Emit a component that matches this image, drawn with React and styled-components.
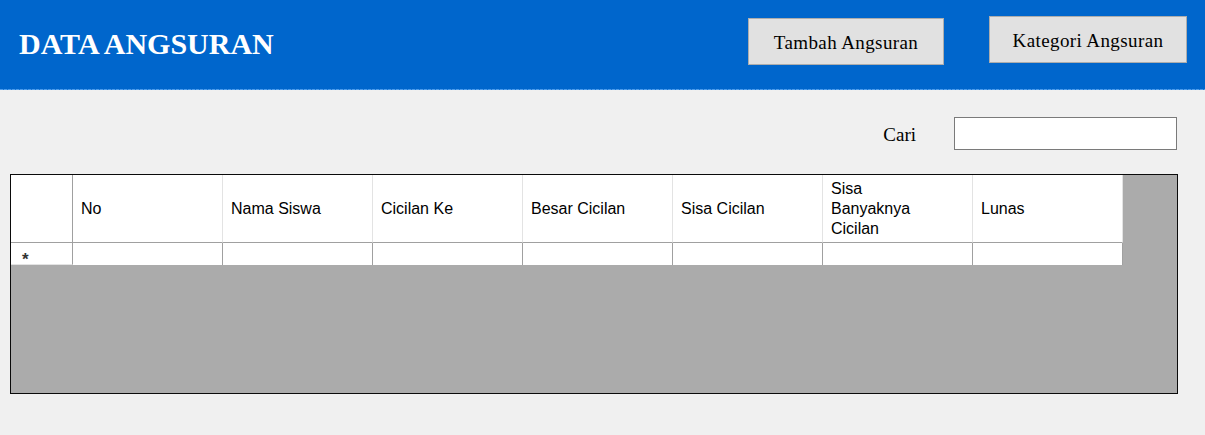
import React from "react";
import styled, { createGlobalStyle } from "styled-components";

const Global = createGlobalStyle`
  html, body { margin: 0; padding: 0; background: #f0f0f0; }
  body { font-family: "Liberation Sans", Arial, sans-serif; }
  * { box-sizing: border-box; }
`;

const Page = styled.div`
  width: 1205px;
  height: 435px;
  background: #f0f0f0;
  overflow: hidden;
`;

const Header = styled.header`
  height: 90px;
  display: flex;
  align-items: flex-start;
  padding: 0 18px 0 19px;
  background-color: #0066cc;
  background-image: repeating-linear-gradient(to right, #4b9cec 0 3px, #1a76d6 3px 4px);
  background-size: 100% 1px;
  background-repeat: no-repeat;
  background-position: 0 89px;
`;

const Title = styled.h1`
  margin: 27px 0 0;
  font-family: "Liberation Serif", "Times New Roman", serif;
  font-weight: bold;
  font-size: 30px;
  line-height: 33px;
  color: #ffffff;
  flex: 1;
`;

const HeadButton = styled.button`
  margin-top: ${(p) => p.$top}px;
  margin-left: ${(p) => p.$gap}px;
  width: ${(p) => p.$w}px;
  height: 47px;
  background: #e1e1e1;
  border: 1px solid #adadad;
  font-family: "Liberation Serif", "Times New Roman", serif;
  font-size: 19px;
  letter-spacing: 0.4px;
  color: #000;
  padding: 2px 0 0;
  cursor: pointer;
`;

const SearchRow = styled.div`
  display: flex;
  justify-content: flex-end;
  align-items: flex-start;
  gap: 38px;
  padding: 27px 28px 0 0;
  height: 84px;
`;

const SearchLabel = styled.label`
  font-family: "Liberation Serif", "Times New Roman", serif;
  font-size: 19px;
  color: #000;
  margin-top: 7px;
`;

const SearchInput = styled.input`
  width: 223px;
  height: 33px;
  border: 1px solid #7a7a7a;
  background: #fff;
  outline: none;
`;

const Grid = styled.div`
  margin-left: 10px;
  width: 1168px;
  height: 220px;
  border: 1px solid #0a0a0a;
  background: #ababab;
  display: grid;
  grid-template-columns: 62px repeat(7, 150px);
  grid-template-rows: 68px 22px;
  align-content: start;
`;

const HeadCell = styled.div`
  background: #fff;
  border-bottom: 1px solid #a0a0a0;
  border-right: 1px solid ${(p) => (p.$corner ? "#a0a0a0" : "#e3e3e3")};
  display: flex;
  align-items: center;
  padding: 1px 0 0 8px;
  font-size: 16px;
  line-height: 20px;
  color: #000;
`;

const DataCell = styled.div`
  background: #fff;
  border-right: 1px solid #a0a0a0;
`;

const RowHeadCell = styled(DataCell)`
  font-size: 17px;
  color: #333;
  padding: 8px 0 0 11px;
  font-weight: bold;
  line-height: 17px;
  border-bottom: 1px solid #e3e3e3;
`;

const columns = [
  ["No"],
  ["Nama Siswa"],
  ["Cicilan Ke"],
  ["Besar Cicilan"],
  ["Sisa Cicilan"],
  ["Sisa", "Banyaknya", "Cicilan"],
  ["Lunas"],
];

export default function App() {
  return (
    <Page>
      <Global />
      <Header>
        <Title>DATA ANGSURAN</Title>
        <HeadButton $top={18} $gap={0} $w={196}>Tambah Angsuran</HeadButton>
        <HeadButton $top={16} $gap={45} $w={198}>Kategori Angsuran</HeadButton>
      </Header>
      <SearchRow>
        <SearchLabel>Cari</SearchLabel>
        <SearchInput />
      </SearchRow>
      <Grid>
        <HeadCell $corner />
        {columns.map((lines, i) => (
          <HeadCell key={i}>
            <div>
              {lines.map((l, j) => (
                <div key={j}>{l}</div>
              ))}
            </div>
          </HeadCell>
        ))}
        <RowHeadCell>*</RowHeadCell>
        {columns.map((_, i) => (
          <DataCell key={i} />
        ))}
      </Grid>
    </Page>
  );
}
